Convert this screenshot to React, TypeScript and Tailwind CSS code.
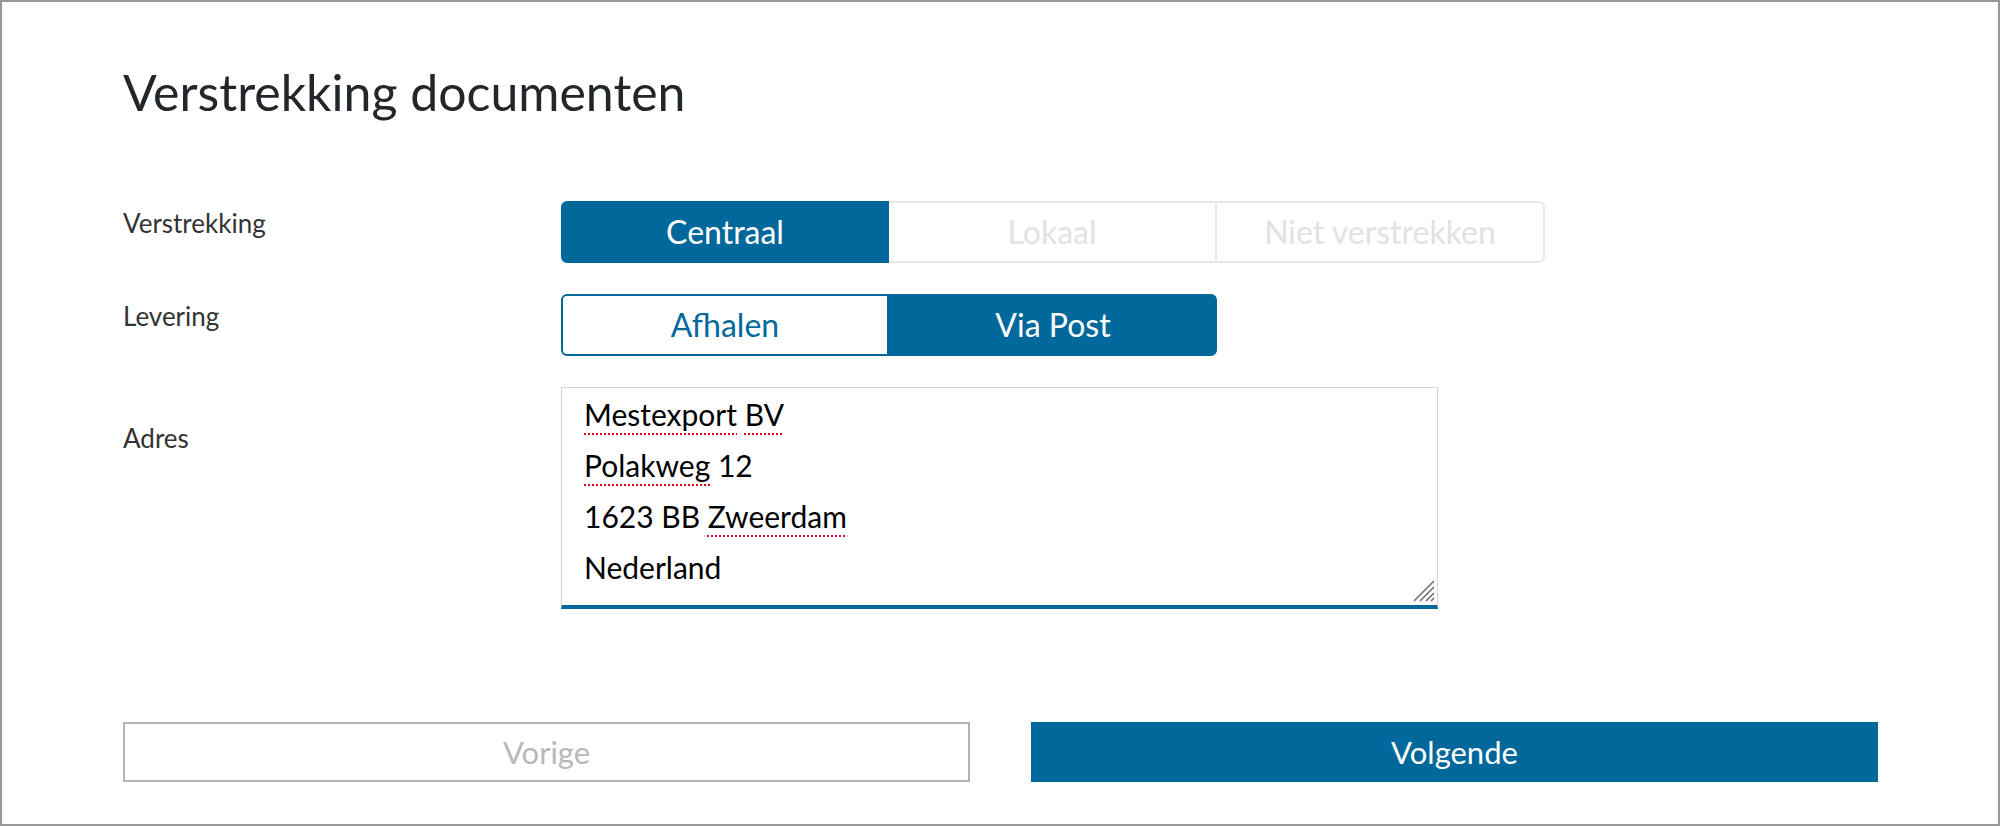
import React from 'react'

const font = { fontFamily: 'Lato, "Noto Sans", sans-serif' }

type Option = { label: string; active?: boolean }

function Segmented({ options, variant }: { options: Option[]; variant: 'disabled' | 'outline' }) {
  return (
    <div className="flex h-[62px]">
      {options.map((opt, i) => {
        const first = i === 0
        const last = i === options.length - 1
        const round = `${first ? 'rounded-l-md' : ''} ${last ? 'rounded-r-md' : ''}`
        let tone = ''
        if (opt.active) {
          tone = 'bg-[#01689b] text-white border-2 border-[#01689b]'
        } else if (variant === 'disabled') {
          tone = `bg-white text-[#e2e2e2] border-y-2 border-r-2 border-[#e8e8e8] ${first ? 'border-l-2' : ''}`
        } else {
          tone = 'bg-white text-[#01689b] border-2 border-[#01689b]'
        }
        return (
          <button
            key={opt.label}
            className={`w-[328px] flex items-center justify-center text-[32px] ${round} ${tone}`}
          >
            {opt.label}
          </button>
        )
      })}
    </div>
  )
}

function Misspelled({ children }: { children: React.ReactNode }) {
  return (
    <span className="underline decoration-dotted decoration-[#e3001b] decoration-2 underline-offset-[7px]">
      {children}
    </span>
  )
}

export default function App() {
  return (
    <div className="h-[826px] w-[2000px] border-2 border-[#999] bg-white" style={font}>
      <div className="pl-[121px] pr-[120px]">
        {/* Title */}
        <h1 className="pt-[60px] text-[50px] leading-[60px] text-[#23272b]">
          Verstrekking documenten
        </h1>

        {/* Form */}
        <div className="mt-[79px] flex flex-col gap-[31px]">
          <div className="flex">
            <div className="w-[438px] pt-[6px] text-[26px] leading-[32px] text-[#333]">Verstrekking</div>
            <Segmented
              variant="disabled"
              options={[{ label: 'Centraal', active: true }, { label: 'Lokaal' }, { label: 'Niet verstrekken' }]}
            />
          </div>

          <div className="flex">
            <div className="w-[438px] pt-[6px] text-[26px] leading-[32px] text-[#333]">Levering</div>
            <Segmented
              variant="outline"
              options={[{ label: 'Afhalen' }, { label: 'Via Post', active: true }]}
            />
          </div>

          <div className="flex">
            <div className="w-[438px] pt-[35px] text-[26px] leading-[32px] text-[#333]">Adres</div>
            <div className="relative w-[877px] h-[222px] border-x-[1.5px] border-t-[1.5px] border-b-4 border-[#d4d4d4] border-b-[#01689b] pl-[22px] pt-[1px] text-[30px] leading-[51px] text-black">
              <div>
                <Misspelled>Mestexport</Misspelled> <Misspelled>BV</Misspelled>
              </div>
              <div>
                <Misspelled>Polakweg</Misspelled> 12
              </div>
              <div>
                1623 BB <Misspelled>Zweerdam</Misspelled>
              </div>
              <div>Nederland</div>
              <svg className="absolute right-[2px] bottom-[3px]" width="24" height="24" viewBox="0 0 24 24">
                <path d="M23 3L3 23M23 9L9 23M23 15L15 23M23 20L20 23" stroke="#6f6f6f" strokeWidth="1.6" fill="none" />
              </svg>
            </div>
          </div>
        </div>

        {/* Navigation */}
        <div className="mt-[113px] grid grid-cols-2 gap-[61px]">
          <button className="h-[60px] border-2 border-[#b4b4b4] bg-white text-[31px] text-[#b8b8b8]">
            Vorige
          </button>
          <button className="h-[60px] bg-[#01689b] text-[31px] text-white">Volgende</button>
        </div>
      </div>
    </div>
  )
}
